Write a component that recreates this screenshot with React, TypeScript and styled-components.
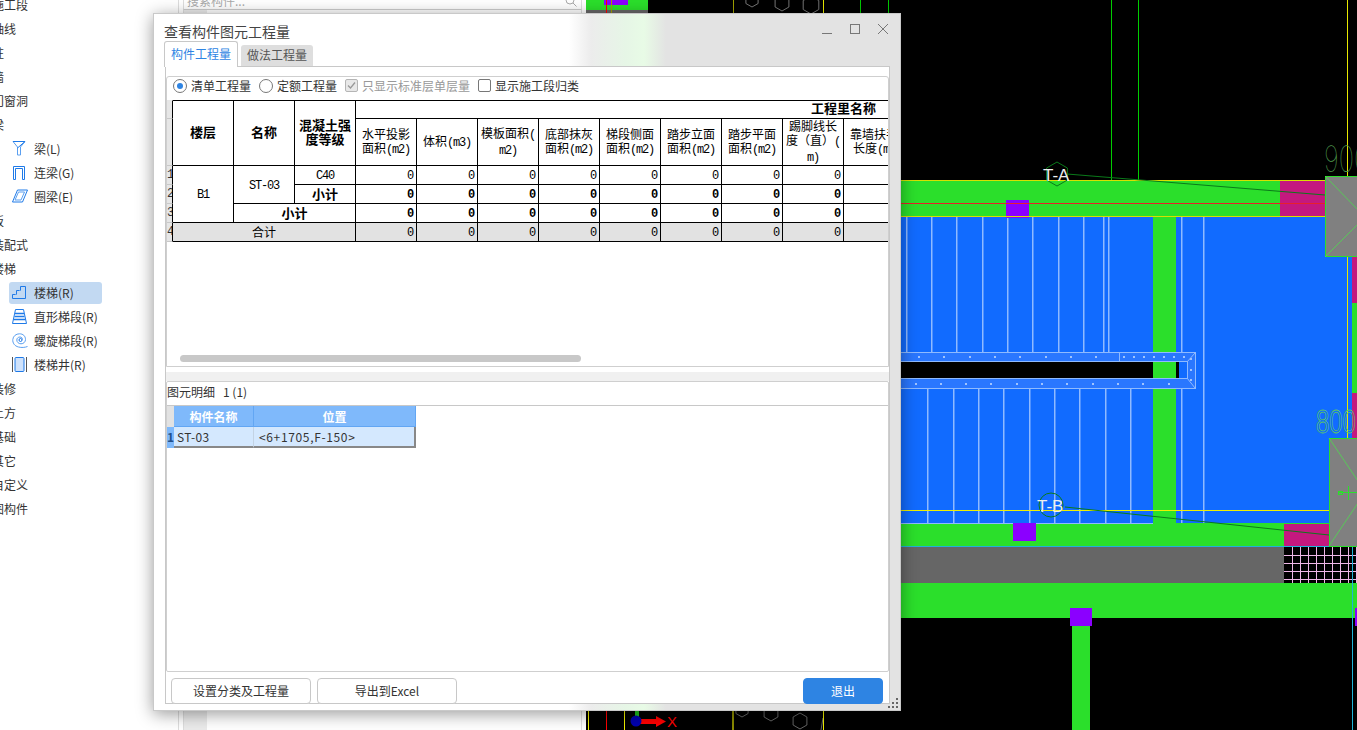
import React from "react";
import styled, { createGlobalStyle } from "styled-components";

const UI = `"Noto Sans CJK SC", "Noto Sans", sans-serif`;

const Global = createGlobalStyle`
  html, body { margin: 0; padding: 0; background: #fff; overflow: hidden; }
  * { box-sizing: border-box; }
`;

const Screen = styled.div`
  position: relative;
  width: 1357px;
  height: 730px;
  display: flex;
  overflow: hidden;
  font-family: ${UI};
  font-size: 12px;
  color: #333;
`;

/* ---------- left tree ---------- */
const Sidebar = styled.nav`
  width: 178px;
  flex: none;
  margin-top: -7px;
  display: flex;
  flex-direction: column;
  background: #fff;
  overflow: hidden;
`;
const Category = styled.div`
  height: 24px;
  flex: none;
  line-height: 24px;
  margin-left: -8px;
  white-space: nowrap;
`;
const TreeItem = styled.div<{ $active?: boolean }>`
  height: 22px;
  flex: none;
  margin: 1px 0 1px 9px;
  width: 93px;
  padding: 0 0 2px 3px;
  display: flex;
  align-items: center;
  border-radius: 3px;
  white-space: nowrap;
  background: ${(p) => (p.$active ? "#c2d9f2" : "transparent")};
`;
const IconSlot = styled.span`
  width: 22px;
  flex: none;
  display: flex;
  align-items: center;
  svg { display: block; }
`;

/* ---------- middle list panel ---------- */
const ListPanel = styled.section`
  width: 408px;
  flex: none;
  display: flex;
  flex-direction: column;
  background: #fff;
  border-left: 1px solid #ddd;
`;
const SearchBox = styled.div`
  height: 19px;
  margin: -9px 4px 0 4px;
  padding: 0 4px 0 3px;
  display: flex;
  align-items: center;
  justify-content: space-between;
  color: #aaa;
  border: 1px solid #ddd;
  border-bottom-color: #ccc;
  flex: none;
`;
const ListBody = styled.div`
  flex: 1;
  margin: 0 4px;
  display: flex;
  justify-content: space-between;
  border-left: 1px solid #ddd;
  border-right: 1px solid #ddd;
`;
const ListGutter = styled.div`
  width: 23px;
  background: #ebebeb;
`;

/* ---------- CAD canvas ---------- */
const Canvas = styled.main`
  flex: 1;
  background: #000;
  svg { display: block; }
`;

/* ---------- dialog ---------- */
const Dialog = styled.div`
  position: absolute;
  left: 153px;
  top: 13px;
  width: 748px;
  height: 698px;
  display: flex;
  flex-direction: column;
  border: 1px solid #c9c9c9;
  box-shadow: 0 3px 16px rgba(0, 0, 0, 0.4);
  background: linear-gradient(
    90deg,
    #fff 0,
    #fff 415px,
    #ececec 437px,
    #e6f6e6 472px,
    #e8fbe6 490px,
    #e3e3e3 512px,
    #e3e3e3 100%
  );
`;
const TitleRow = styled.header`
  height: 27px;
  flex: none;
  display: flex;
  align-items: center;
  padding: 6px 12px 0 10px;
`;
const Title = styled.h1`
  margin: 0;
  font-size: 14px;
  font-weight: 400;
  color: #444;
`;
const WindowButtons = styled.div`
  margin-left: auto;
  display: flex;
  gap: 18px;
  margin-top: -4px;
  svg { display: block; }
`;
const TabRow = styled.div`
  height: 25px;
  flex: none;
  display: flex;
  align-items: flex-end;
  padding-left: 10px;
  gap: 3px;
  position: relative;
  z-index: 1;
`;
const Tab = styled.div<{ $active?: boolean }>`
  width: ${(p) => (p.$active ? 74 : 72)}px;
  height: ${(p) => (p.$active ? 26 : 21)}px;
  margin-bottom: ${(p) => (p.$active ? -1 : 0)}px;
  padding-bottom: 2px;
  display: flex;
  align-items: center;
  justify-content: center;
  border-radius: 3px 3px 0 0;
  background: ${(p) => (p.$active ? "#fff" : "#dedede")};
  border: ${(p) => (p.$active ? "1px solid #c8c8c8" : "none")};
  border-bottom: none;
  color: ${(p) => (p.$active ? "#2e84e3" : "#555")};
`;
const DialogBody = styled.div`
  flex: 1;
  min-height: 0;
  padding: 0 10px 6px 11px;
`;
const TabPanel = styled.div`
  height: 100%;
  display: flex;
  flex-direction: column;
  border: 1px solid #c8c8c8;
  background: #fff;
  padding-top: 9px;
`;
const TopPane = styled.div`
  height: 291px;
  flex: none;
  display: flex;
  flex-direction: column;
  border: 1px solid #cfcfcf;
  border-radius: 3px 3px 0 0;
  overflow: hidden;
`;
const Options = styled.div`
  height: 23px;
  flex: none;
  display: flex;
  align-items: center;
  gap: 8px;
  padding: 0 0 6px 6px;
`;
const Option = styled.label<{ $disabled?: boolean }>`
  display: flex;
  align-items: center;
  gap: 4px;
  white-space: nowrap;
  color: ${(p) => (p.$disabled ? "#999" : "#333")};
`;
const Radio = styled.span<{ $on?: boolean }>`
  width: 14px;
  height: 14px;
  border-radius: 50%;
  border: 1px solid #777;
  display: flex;
  align-items: center;
  justify-content: center;
  &::after {
    content: "";
    width: 6px;
    height: 6px;
    border-radius: 50%;
    background: ${(p) => (p.$on ? "#2e84e3" : "transparent")};
  }
`;
const Check = styled.span<{ $on?: boolean }>`
  width: 13px;
  height: 13px;
  border-radius: 2px;
  border: 1px solid ${(p) => (p.$on ? "#b5b5b5" : "#777")};
  background: ${(p) => (p.$on ? "#e8e8e8" : "#fff")};
  display: flex;
  align-items: center;
  justify-content: center;
  svg { display: block; }
`;

const TableWrap = styled.div`
  flex: 1;
  min-height: 0;
  overflow: hidden;
`;
const Table = styled.table`
  width: 738px;
  table-layout: fixed;
  border-collapse: separate;
  border-spacing: 0;
  font-family: ${UI};
  color: #000;
`;
const NumCol = styled.col`
  width: 6px;
`;
const DataCol = styled.col`
  width: 61px;
`;
const NumCell = styled.td`
  padding: 0;
  background: #e6e6e6;
  border-right: 1px solid #000;
  border-bottom: 1px solid #c8c8c8;
  overflow: hidden;
  font-family: "Liberation Mono", monospace;
  font-size: 12px;
  line-height: 1;
  text-align: left;
  color: #333;
`;
const NumHead = styled(NumCell)`
  border-top: 1px solid #e6e6e6;
`;
const HeadCell = styled.th<{ $big?: boolean; $top?: boolean }>`
  padding: 0 0 ${(p) => (p.$big ? 3 : 0)}px;
  text-align: center;
  vertical-align: middle;
  font-size: ${(p) => (p.$big ? 13 : 12)}px;
  font-weight: ${(p) => (p.$big ? 700 : 400)};
  line-height: 14px;
  border-right: 1px solid #000;
  border-bottom: 1px solid #000;
  border-top: ${(p) => (p.$top ? "1px solid #000" : "none")};
  white-space: nowrap;
  overflow: hidden;
`;
const GroupHead = styled(HeadCell)`
  text-align: right;
  padding-right: 28px;
  height: 19px;
`;
const Cell = styled.td<{ $bold?: boolean; $total?: boolean; $right?: boolean }>`
  padding: 0 ${(p) => (p.$right ? 3 : 0)}px 0 0;
  height: 19px;
  font-size: 12px;
  line-height: 16px;
  text-align: ${(p) => (p.$right ? "right" : "center")};
  font-weight: ${(p) => (p.$bold ? 700 : 400)};
  background: ${(p) => (p.$total ? "#e2e2e2" : "#fff")};
  border-right: 1px solid #000;
  border-bottom: 1px solid #000;
  overflow: hidden;
  white-space: nowrap;
`;
const M = styled.span`
  font-family: "Liberation Mono", monospace;
  letter-spacing: -1.2px;
  font-size: 12px;
`;
const BoldText = styled.span`
  font-size: 13px;
`;
const HeadRow = styled.tr`
  height: 47px;
`;
const ScrollTrack = styled.div`
  height: 11px;
  flex: none;
  padding-left: 13px;
`;
const ScrollThumb = styled.div`
  width: 401px;
  height: 7px;
  border-radius: 4px;
  background: #c8c8c8;
`;
const Splitter = styled.div`
  height: 14px;
  flex: none;
  border-top: 5px solid #fff;
  background: #f0f0f0;
`;
const LowerPane = styled.div`
  height: 291px;
  flex: none;
  border: 1px solid #cfcfcf;
  border-radius: 2px;
  display: flex;
  flex-direction: column;
`;
const PaneTitle = styled.div`
  height: 24px;
  flex: none;
  display: flex;
  align-items: center;
  gap: 8px;
  padding-bottom: 5px;
  border-bottom: 1px solid #c8c8c8;
  color: #333;
`;
const MiniTable = styled.table`
  width: 249px;
  table-layout: fixed;
  border-collapse: separate;
  border-spacing: 0;
  font-family: ${UI};
`;
const MiniNumCol = styled.col`
  width: 7px;
`;
const MiniNameCol = styled.col`
  width: 80px;
`;
const MiniPosCol = styled.col`
  width: 162px;
`;
const MiniCorner = styled.th`
  padding: 0;
  height: 21px;
  background: #e2e2e2;
`;
const MiniHead = styled.th`
  padding: 0;
  height: 21px;
  background: #7fb9fb;
  color: #fff;
  font-size: 12px;
  font-weight: 700;
  border-right: 1px solid #62a6f3;
  border-bottom: 1px solid #62a6f3;
`;
const MiniNum = styled.td`
  padding: 0;
  background: #7fb9fb;
  font-weight: 700;
  font-size: 12px;
  text-align: center;
  color: #24508a;
  overflow: hidden;
  border-bottom: 2px solid #7fb9fb;
`;
const MiniCell = styled.td<{ $last?: boolean; $pad: number }>`
  padding: 0 0 0 ${(p) => p.$pad}px;
  height: 21px;
  background: #d4e8fe;
  color: #333;
  font-size: 12px;
  letter-spacing: ${(p) => (p.$last ? 0.65 : 0.4)}px;
  border-bottom: 2px solid #888;
  border-right: ${(p) => (p.$last ? "2px solid #888" : "1px solid #c3d3e4")};
`;
const Footer = styled.footer`
  flex: 1;
  display: flex;
  gap: 6px;
  padding: 6px 6px 0 5px;
`;
const Button = styled.button<{ $primary?: boolean }>`
  width: ${(p) => (p.$primary ? 80 : 140)}px;
  height: 26px;
  margin-left: ${(p) => (p.$primary ? "auto" : "0")};
  padding: 0 0 2px;
  font-family: ${UI};
  font-size: 12px;
  border-radius: 4px;
  border: 1px solid ${(p) => (p.$primary ? "#2e84e3" : "#c8c8c8")};
  background: ${(p) => (p.$primary ? "#2e84e3" : "#fff")};
  color: ${(p) => (p.$primary ? "#fff" : "#333")};
`;
const Grip = styled.svg`
  position: absolute;
  right: 1px;
  bottom: 1px;
  display: block;
`;

/* ---------- icons ---------- */
const B = "#1f7ae8";
const L = "#5a9ff0";
const IconBeam = () => (
  <svg width="14" height="16" viewBox="0 0 14 16" fill="none">
    <path d="M1 1.5h12L8.5 7v8H5.5V7z" stroke={L} />
    <path d="M1 1.5h12L5.5 8" stroke={B} />
  </svg>
);
const IconLink = () => (
  <svg width="14" height="15" viewBox="0 0 14 15" fill="none">
    <path d="M1.5 14.5V1.5h11v13h-2V3.500h-7v11z" stroke={B} />
  </svg>
);
const IconRing = () => (
  <svg width="16" height="14" viewBox="0 0 16 14" fill="none">
    <path d="M5.5 1h10l-5 12H.5z" stroke={B} />
    <path d="M6.5 3h6l-3.500 8H3z" stroke={L} />
  </svg>
);
const IconStair = () => (
  <svg width="14" height="14" viewBox="0 0 14 14" fill="none">
    <path d="M.5 13.500v-4h4v-4h4V1.500h5v12z" stroke={B} />
    <path d="M3 9.500h2M7 5.500h2" stroke={L} />
  </svg>
);
const IconFlight = () => (
  <svg width="15" height="15" viewBox="0 0 15 15" fill="none">
    <path d="M3.500 .5h8l3 14H.5z" stroke={B} />
    <path d="M3 4.500h9M2.500 7.500h10M1.500 10.500h12" stroke={B} strokeWidth="1.500" />
  </svg>
);
const IconSpiral = () => (
  <svg width="16" height="15" viewBox="0 0 16 15" fill="none">
    <path d="M15.500 13.500C13 14.500 9.500 14.800 6.500 14C2.500 13 .5 10 .8 6.500C1.200 3 4 .8 7.500 .8C11 .8 13.500 3 13.500 6.500C13.500 9 11.500 10.800 9 10.800C6.500 10.800 4.800 9 4.800 7C4.800 5.200 6.200 4 8 4C9.500 4 10.500 5 10.500 6.500" stroke={L} />
    <circle cx="8.500" cy="7" r="1.500" stroke={B} />
  </svg>
);
const IconWell = () => (
  <svg width="15" height="15" viewBox="0 0 15 15" fill="none">
    <path d="M.5 0v15M14.500 0v15" stroke="#555" />
    <rect x="3" y=".5" width="9" height="14" rx="1" fill="#cfe2fb" stroke={B} />
  </svg>
);

/* ---------- CAD helpers ---------- */
const hex = (cx: number, cy: number, r: number) =>
  [0, 1, 2, 3, 4, 5]
    .map((i) => {
      const a = Math.PI / 6 + (i * Math.PI) / 3;
      return `${(cx + r * Math.cos(a)).toFixed(1)},${(cy + r * Math.sin(a)).toFixed(1)}`;
    })
    .join(" ");

const GREEN = "#2bdf2b";
const BLUE = "#116bff";
const MAG = "#c4187f";
const PUR = "#8b00ff";
const STEP = "#8fbaff";

const upperSteps = [906, 931, 956, 982, 1007, 1032, 1058, 1083, 1103, 1108];
const lowerSteps = [927, 953, 978, 1003, 1029, 1054, 1079, 1105, 1130];
const sideSteps = [1181, 1203];
const dotsTop = [918, 943, 969, 994, 1019, 1045, 1070, 1095, 1123, 1133, 1143, 1153, 1163, 1173, 1183];
const dotsBottom = [915, 940, 965, 990, 1016, 1041, 1066, 1092, 1117, 1142, 1168];
const gridX = [1292, 1300, 1308, 1316, 1324, 1332, 1340, 1348, 1356];
const gridY = [555, 563, 571, 579];

const CadDrawing = () => (
  <svg width="771" height="730" viewBox="586 0 771 730" shapeRendering="crispEdges">
    {/* top-left fragment */}
    <rect x="586" y="0" width="62" height="10" fill={GREEN} />
    <rect x="604" y="0" width="24" height="5" fill={PUR} />
    <rect x="586" y="10" width="62" height="3" fill="#666" />
    <rect x="606" y="0" width="1" height="13" fill="#f00" />
    <rect x="611" y="0" width="1" height="13" fill="#a0a000" />
    <rect x="733" y="0" width="1" height="14" fill="#a0a000" />
    <rect x="823" y="0" width="1" height="14" fill="#e8e800" />
    <g shapeRendering="auto" fill="none" stroke="#777">
      <polygon points={hex(752, 0, 7)} />
      <polygon points={hex(782, 3, 8)} />
      <polygon points={hex(811, 5, 9)} />
    </g>
    <rect x="860" y="0" width="1" height="14" fill="#0c0" />
    <rect x="888" y="0" width="1" height="14" fill="#0c0" />

    {/* top verticals */}
    <rect x="1111" y="0" width="1" height="180" fill="#0c0" />
    <rect x="1138" y="0" width="1" height="180" fill="#0c0" />
    <rect x="1347" y="0" width="1" height="176" fill="#e8e800" />

    {/* blue stair field */}
    <rect x="886" y="217" width="471" height="306" fill={BLUE} />
    <g shapeRendering="auto" fill={STEP}>
      {upperSteps.map((x) => (
        <rect key={x} x={x} y="217" width="1.500" height="135" />
      ))}
      {lowerSteps.map((x) => (
        <rect key={x} x={x} y="388" width="1.500" height="135" />
      ))}
      {sideSteps.map((x) => (
        <rect key={x} x={x} y="217" width="1.500" height="306" />
      ))}
    </g>
    <rect x="1153" y="217" width="23" height="306" fill={GREEN} />

    {/* top beam */}
    <rect x="886" y="180" width="439" height="37" fill={GREEN} />
    <rect x="1280" y="181" width="45" height="35" fill={MAG} />
    <rect x="1006" y="200" width="23" height="18" fill={PUR} />
    <rect x="886" y="180" width="439" height="1" fill="#d8e000" />
    <rect x="886" y="216" width="439" height="1" fill="#d8e000" />
    <rect x="886" y="203" width="471" height="1" fill="#e8202a" />

    {/* right edge strip */}
    <rect x="1352" y="257" width="5" height="46" fill={MAG} />
    <rect x="1352" y="303" width="5" height="90" fill={GREEN} />
    <rect x="1352" y="393" width="5" height="45" fill={MAG} />
    <rect x="1347" y="257" width="1" height="181" fill="#e8e800" />

    {/* handrail */}
    <rect x="886" y="352" width="310" height="37" fill="#2a77ff" />
    <rect x="886" y="352.500" width="309.500" height="36" fill="none" stroke={STEP} />
    <rect x="886" y="362" width="301" height="16" fill={BLUE} />
    <rect x="886" y="362" width="267" height="16" fill="#000" />
    <rect x="1153" y="362" width="23" height="16" fill={GREEN} />
    <rect x="1176" y="362" width="3" height="16" fill="#000" />
    <rect x="886" y="361" width="301" height="1" fill={STEP} />
    <rect x="886" y="378" width="301" height="1" fill={STEP} />
    <rect x="1187" y="361" width="1" height="18" fill={STEP} />
    <rect x="1119" y="353" width="1" height="9" fill={STEP} />
    <g shapeRendering="auto" stroke={STEP}>
      <line x1="1187" y1="362" x2="1195" y2="353" />
      <line x1="1187" y1="378" x2="1195" y2="388" />
    </g>
    <g fill="#a0c4ff">
      {dotsTop.map((x) => (
        <rect key={x} x={x} y="356" width="2" height="2" />
      ))}
      {dotsBottom.map((x) => (
        <rect key={x} x={x} y="383" width="2" height="2" />
      ))}
      <rect x="1190" y="358" width="2" height="2" />
      <rect x="1190" y="369" width="2" height="2" />
      <rect x="1190" y="379" width="2" height="2" />
    </g>

    {/* lower beam, slab, beam */}
    <rect x="886" y="523" width="471" height="24" fill={GREEN} />
    <rect x="886" y="523" width="267" height="1" fill={STEP} />
    <rect x="1284" y="524" width="45" height="23" fill={MAG} />
    <rect x="1013" y="523" width="23" height="18" fill={PUR} />
    <rect x="886" y="510" width="443" height="1" fill="#f0f000" />
    <rect x="886" y="547" width="398" height="36" fill="#666" />
    <rect x="1284" y="547" width="73" height="36" fill="#000" />
    {gridX.map((x) => (
      <rect key={x} x={x} y="547" width="1" height="36" fill="#f0b8e8" />
    ))}
    {gridY.map((y) => (
      <rect key={y} x="1284" y={y} width="73" height="1" fill="#f0b8e8" />
    ))}
    <rect x="886" y="583" width="471" height="35" fill={GREEN} />
    <rect x="1072" y="618" width="18" height="112" fill={GREEN} />
    <rect x="1070" y="608" width="22" height="18" fill={PUR} />
    <rect x="1355" y="608" width="2" height="18" fill={PUR} />
    <rect x="886" y="546" width="471" height="1" fill="#1fb4d8" />
    <rect x="1352" y="547" width="1" height="183" fill="#1fb4d8" />

    {/* columns */}
    <rect x="1325.500" y="176.500" width="40" height="80" fill="#808080" stroke={GREEN} />
    <rect x="1329.500" y="438.500" width="40" height="108" fill="#808080" stroke={GREEN} />
    <g shapeRendering="auto" stroke="#58c858">
      <line x1="1325" y1="176" x2="1360" y2="212" />
      <line x1="1325" y1="257" x2="1360" y2="222" />
      <line x1="1329" y1="438" x2="1360" y2="484" />
      <line x1="1329" y1="546" x2="1360" y2="500" />
    </g>
    <path d="M1338 492h19M1348 486v14" stroke={GREEN} fill="none" />
    <rect x="1338" y="491" width="4" height="3" fill="none" stroke={GREEN} />

    {/* labels and leaders */}
    <g shapeRendering="auto">
      <line x1="1067" y1="174" x2="1325" y2="195" stroke="#0a7a1a" />
      <line x1="1065" y1="507" x2="1329" y2="535" stroke="#0a7a1a" />
      <polygon points={hex(1057, 174, 12)} fill="none" stroke="#0a7a1a" />
      <circle cx="1051" cy="505" r="12" fill="none" stroke="#0a7a1a" />
      <text x="1043" y="181" fill="#eee" fontFamily="Liberation Sans" fontSize="17">T-A</text>
      <text x="1037" y="512" fill="#eee" fontFamily="Liberation Sans" fontSize="17">T-B</text>
      <text x="0" y="0" fill="#4f9a4f" fontFamily="Inter" fontWeight="100" fontSize="36" transform="translate(1324 172) scale(.72 1)">900</text>
      <text x="0" y="0" fill="none" stroke="#5fc85f" strokeWidth=".8" fontFamily="Liberation Sans" fontSize="34" transform="translate(1316 433) scale(.7 1)">800</text>
    </g>

    {/* bottom fragment */}
    <rect x="588" y="711" width="1" height="19" fill="#f0f000" />
    <rect x="606" y="711" width="1" height="19" fill="#f00" />
    <rect x="624" y="711" width="1" height="19" fill="#f0f000" />
    <rect x="635" y="711" width="4" height="6" fill="#1fc01f" />
    <rect x="640" y="719" width="18" height="5" fill="#f00" />
    <g shapeRendering="auto">
      <polygon points="656,716 666,721.500 656,727" fill="#f00" />
      <circle cx="636" cy="721" r="5.500" fill="#0000b0" />
      <text x="667" y="727" fill="#f00" fontFamily="Liberation Sans" fontSize="15">X</text>
      <g fill="none" stroke="#666">
        <polygon points={hex(742, 710, 7)} />
        <polygon points={hex(771, 713, 8)} />
        <polygon points={hex(800, 721, 8)} />
      </g>
      <line x1="823" y1="718" x2="821" y2="730" stroke="#666" />
    </g>
    <rect x="732" y="711" width="2" height="19" fill="#8a8a00" />
    <rect x="823" y="711" width="1" height="19" fill="#f0f000" />
  </svg>
);

/* ---------- data ---------- */
const metricHeads: React.ReactNode[] = [
  <>水平投影<br />面积<M>(m2)</M></>,
  <>体积<M>(m3)</M></>,
  <>模板面积<M>(</M><br /><M>m2)</M></>,
  <>底部抹灰<br />面积<M>(m2)</M></>,
  <>梯段侧面<br />面积<M>(m2)</M></>,
  <>踏步立面<br />面积<M>(m2)</M></>,
  <>踏步平面<br />面积<M>(m2)</M></>,
  <>踢脚线长<br />度（直）<M>(</M><br /><M>m)</M></>,
  <>靠墙扶手<br />长度<M>(m)</M></>,
];

const zeros = [0, 1, 2, 3, 4, 5, 6, 7, 8];
const Zeros = ({ bold, total }: { bold?: boolean; total?: boolean }) => (
  <>
    {zeros.map((i) => (
      <Cell key={i} $right $bold={bold} $total={total}>
        <M>0</M>
      </Cell>
    ))}
  </>
);

export default function App() {
  return (
    <Screen>
      <Global />
      <Sidebar>
        <Category>施工段</Category>
        <Category>轴线</Category>
        <Category>柱</Category>
        <Category>墙</Category>
        <Category>门窗洞</Category>
        <Category>梁</Category>
        <TreeItem><IconSlot><IconBeam /></IconSlot>梁(L)</TreeItem>
        <TreeItem><IconSlot><IconLink /></IconSlot>连梁(G)</TreeItem>
        <TreeItem><IconSlot><IconRing /></IconSlot>圈梁(E)</TreeItem>
        <Category>板</Category>
        <Category>装配式</Category>
        <Category>楼梯</Category>
        <TreeItem $active><IconSlot><IconStair /></IconSlot>楼梯(R)</TreeItem>
        <TreeItem><IconSlot><IconFlight /></IconSlot>直形梯段(R)</TreeItem>
        <TreeItem><IconSlot><IconSpiral /></IconSlot>螺旋梯段(R)</TreeItem>
        <TreeItem><IconSlot><IconWell /></IconSlot>楼梯井(R)</TreeItem>
        <Category>装修</Category>
        <Category>土方</Category>
        <Category>基础</Category>
        <Category>其它</Category>
        <Category>自定义</Category>
        <Category>图构件</Category>
      </Sidebar>

      <ListPanel>
        <SearchBox>
          <span>搜索构件...</span>
          <svg width="12" height="12" viewBox="0 0 12 12" fill="none" stroke="#aaa">
            <circle cx="5" cy="5" r="4" />
            <path d="M8 8l3.500 3.500" />
          </svg>
        </SearchBox>
        <ListBody>
          <ListGutter />
        </ListBody>
      </ListPanel>

      <Canvas>
        <CadDrawing />
      </Canvas>

      <Dialog>
        <TitleRow>
          <Title>查看构件图元工程量</Title>
          <WindowButtons>
            <svg width="10" height="10" viewBox="0 0 10 10" fill="none" stroke="#777">
              <path d="M0 9.500h10" />
            </svg>
            <svg width="10" height="10" viewBox="0 0 10 10" fill="none" stroke="#777">
              <rect x=".5" y=".5" width="9" height="9" />
            </svg>
            <svg width="10" height="10" viewBox="0 0 10 10" fill="none" stroke="#777">
              <path d="M0 0l10 10M10 0L0 10" />
            </svg>
          </WindowButtons>
        </TitleRow>
        <TabRow>
          <Tab $active>构件工程量</Tab>
          <Tab>做法工程量</Tab>
        </TabRow>
        <DialogBody>
          <TabPanel>
            <TopPane>
              <Options>
                <Option><Radio $on />清单工程量</Option>
                <Option><Radio />定额工程量</Option>
                <Option $disabled>
                  <Check $on>
                    <svg width="9" height="9" viewBox="0 0 9 9" fill="none" stroke="#999" strokeWidth="1.300">
                      <path d="M1 4.500l2.500 2.500L8 1.500" />
                    </svg>
                  </Check>
                  只显示标准层单层量
                </Option>
                <Option><Check />显示施工段归类</Option>
              </Options>
              <TableWrap>
                <Table>
                  <colgroup>
                    <NumCol />
                    {[...Array(12).keys()].map((i) => (
                      <DataCol key={i} />
                    ))}
                  </colgroup>
                  <thead>
                    <tr>
                      <NumHead />
                      <HeadCell $big $top rowSpan={2}>楼层</HeadCell>
                      <HeadCell $big $top rowSpan={2}>名称</HeadCell>
                      <HeadCell $big $top rowSpan={2}>混凝土强<br />度等级</HeadCell>
                      <GroupHead $big $top colSpan={9}>工程里名称</GroupHead>
                    </tr>
                    <HeadRow>
                      <NumCell />
                      {metricHeads.map((h, i) => (
                        <HeadCell key={i}>{h}</HeadCell>
                      ))}
                    </HeadRow>
                  </thead>
                  <tbody>
                    <tr>
                      <NumCell>1</NumCell>
                      <Cell rowSpan={3}><M>B1</M></Cell>
                      <Cell rowSpan={2}><M>ST-03</M></Cell>
                      <Cell><M>C40</M></Cell>
                      <Zeros />
                    </tr>
                    <tr>
                      <NumCell>2</NumCell>
                      <Cell $bold><BoldText>小计</BoldText></Cell>
                      <Zeros bold />
                    </tr>
                    <tr>
                      <NumCell>3</NumCell>
                      <Cell $bold colSpan={2}><BoldText>小计</BoldText></Cell>
                      <Zeros bold />
                    </tr>
                    <tr>
                      <NumCell>4</NumCell>
                      <Cell $total colSpan={3}>合计</Cell>
                      <Zeros total />
                    </tr>
                  </tbody>
                </Table>
              </TableWrap>
              <ScrollTrack>
                <ScrollThumb />
              </ScrollTrack>
            </TopPane>
            <Splitter />
            <LowerPane>
              <PaneTitle>
                <span>图元明细</span>
                <span>1 (1)</span>
              </PaneTitle>
              <MiniTable>
                <colgroup>
                  <MiniNumCol />
                  <MiniNameCol />
                  <MiniPosCol />
                </colgroup>
                <thead>
                  <tr>
                    <MiniCorner />
                    <MiniHead>构件名称</MiniHead>
                    <MiniHead>位置</MiniHead>
                  </tr>
                </thead>
                <tbody>
                  <tr>
                    <MiniNum>1</MiniNum>
                    <MiniCell $pad={3}>ST-03</MiniCell>
                    <MiniCell $pad={5} $last>&lt;6+1705,F-150&gt;</MiniCell>
                  </tr>
                </tbody>
              </MiniTable>
            </LowerPane>
            <Footer>
              <Button>设置分类及工程量</Button>
              <Button>导出到Excel</Button>
              <Button $primary>退出</Button>
            </Footer>
          </TabPanel>
        </DialogBody>
        <Grip width="11" height="11" viewBox="0 0 11 11" fill="#666">
          <rect x="8" y="0" width="2" height="2" />
          <rect x="4" y="4" width="2" height="2" />
          <rect x="8" y="4" width="2" height="2" />
          <rect x="0" y="8" width="2" height="2" />
          <rect x="4" y="8" width="2" height="2" />
          <rect x="8" y="8" width="2" height="2" />
        </Grip>
      </Dialog>
    </Screen>
  );
}
